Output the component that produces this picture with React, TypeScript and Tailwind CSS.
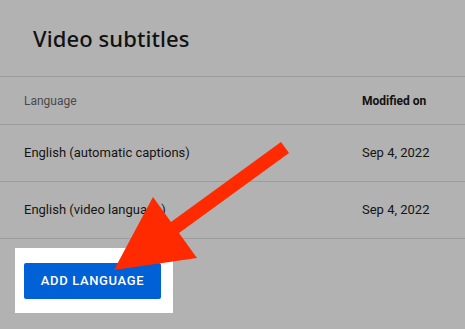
import React from "react";

export default function App() {
  return (
    <div className="relative w-[465px] h-[329px] overflow-hidden bg-[#b2b2b2] font-['Roboto','Liberation_Sans',sans-serif]">
      <div className="h-[77px] border-b border-[#9c9c9c] flex items-center pl-[33px]">
        <h1 className="text-[22px] font-medium text-[#111] font-['Noto_Sans','Roboto',sans-serif] tracking-[0.1px]">
          Video subtitles
        </h1>
      </div>
      <div className="h-[48px] border-b border-[#9c9c9c] grid grid-cols-[338px_1fr] items-center px-[24px] text-[12px]">
        <span className="text-[#4a4a4a]">Language</span>
        <span className="font-bold text-[#111]">Modified on</span>
      </div>
      <div className="h-[57px] border-b border-[#9c9c9c] grid grid-cols-[338px_1fr] items-center px-[24px] text-[13px] text-[#151515]">
        <span>English (automatic captions)</span>
        <span>Sep 4, 2022</span>
      </div>
      <div className="h-[57px] border-b border-[#9c9c9c] grid grid-cols-[338px_1fr] items-center px-[24px] text-[13px] text-[#151515]">
        <span>English (video language)</span>
        <span>Sep 4, 2022</span>
      </div>
      <div className="mt-[9px] ml-[15px] w-[158px] h-[65px] bg-white pt-[15px] pl-[9px]">
        <button className="w-[137px] h-[36px] rounded-[2px] bg-[#0060d6] text-white text-[13px] font-medium tracking-[0.65px]">
          ADD LANGUAGE
        </button>
      </div>
      <svg className="absolute left-0 top-0" width="465" height="329" viewBox="0 0 465 329">
        <polygon
          points="281,142 289,153 179,233 197,258 114,270 153,197 171,222"
          fill="#ff2a00"
        />
      </svg>
    </div>
  );
}
